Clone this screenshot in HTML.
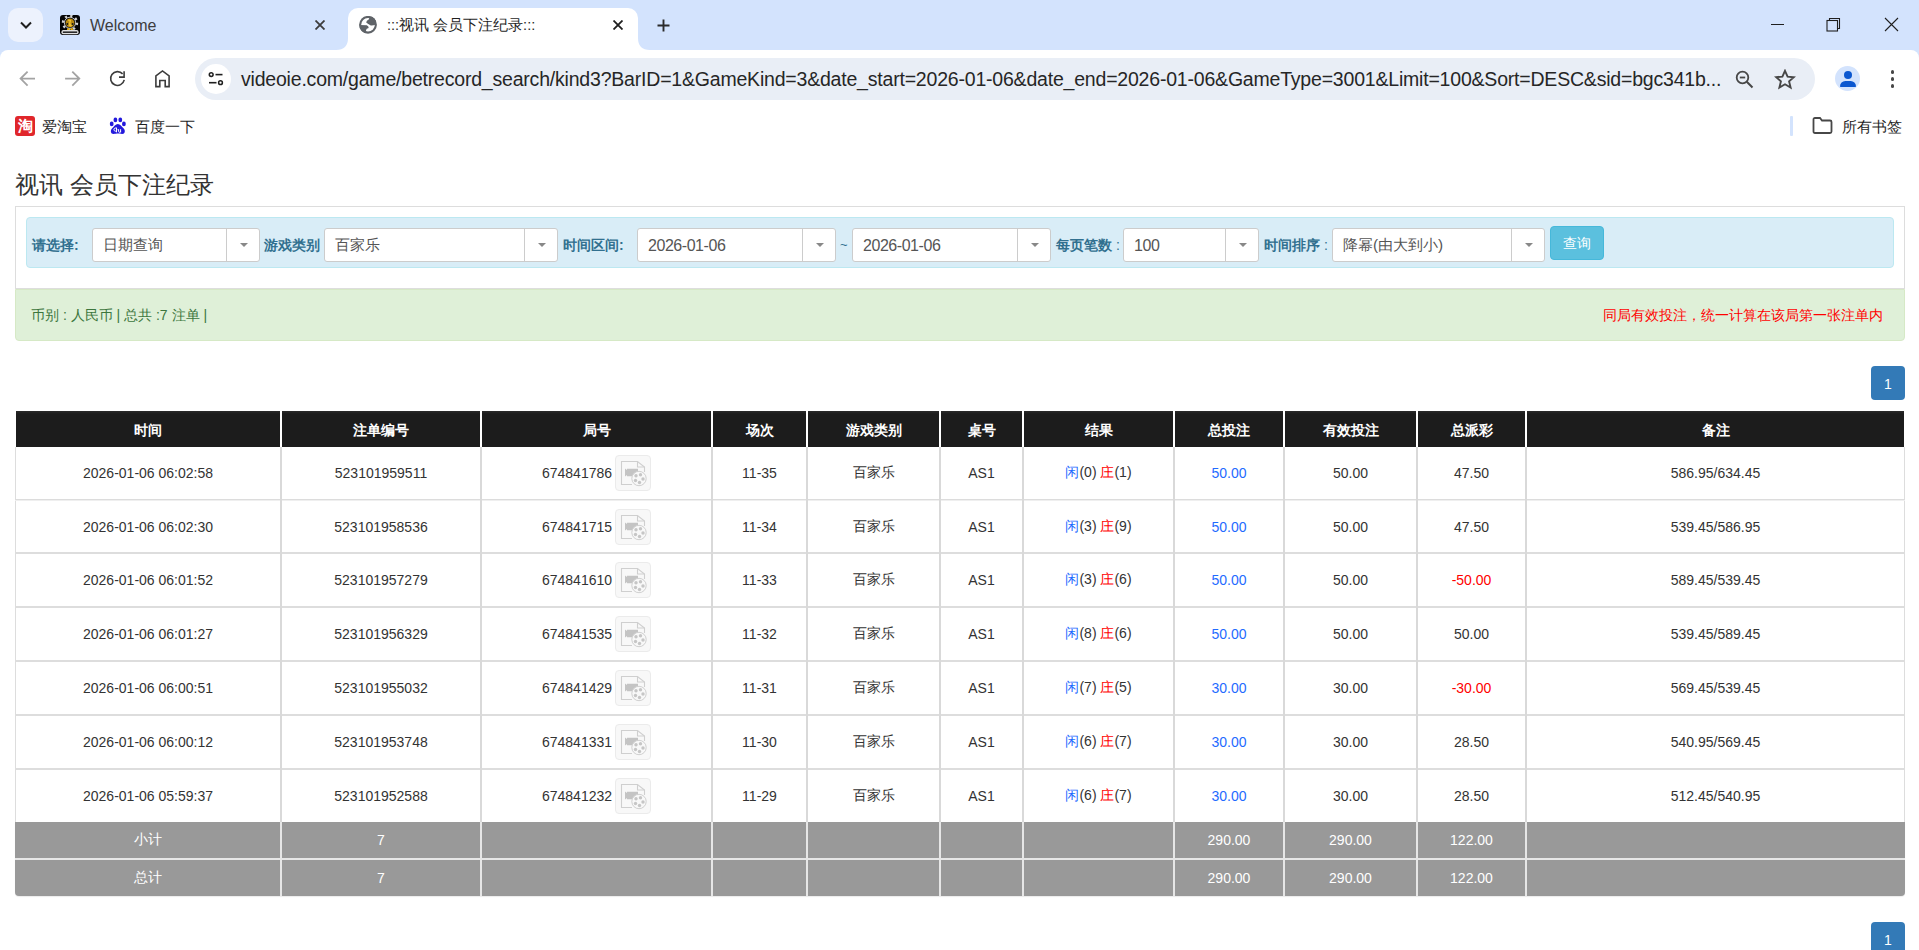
<!DOCTYPE html><html><head><meta charset="utf-8"><style>
*{box-sizing:border-box;margin:0;padding:0}
html,body{width:1919px;height:950px;overflow:hidden;background:#fff;font-family:"Liberation Sans", sans-serif;}
.a{position:absolute}
.cc{display:flex;align-items:center;justify-content:center}
.tx{white-space:nowrap}

</style></head><body>
<div class="a" style="left:0;top:0;width:1919px;height:60px;background:#d3e3fd"></div>
<div class="a cc" style="left:8px;top:8px;width:35px;height:34px;border-radius:10px;background:#edf2fd"><svg width="14" height="9" viewBox="0 0 14 9"><path d="M2 1.5 L7 6.5 L12 1.5" fill="none" stroke="#1f1f1f" stroke-width="2"/></svg></div>
<svg class="a" style="left:60px;top:15px" width="20" height="20" viewBox="0 0 20 20"><rect x="0" y="0" width="20" height="20" rx="3" fill="#050505"/><circle cx="10" cy="7.8" r="7" fill="none" stroke="#d4d4d4" stroke-width="2.4" stroke-dasharray="2.2 3.3"/><circle cx="10" cy="7.8" r="5.6" fill="none" stroke="#c8c8c8" stroke-width="1"/><circle cx="10" cy="7.8" r="4.4" fill="#b88a12"/><path d="M8.2 4.6 Q11.8 4 10.8 6.8 Q9.6 9.2 12.2 10.4 L10.2 11.8 Q7.6 10 9.2 7.4 Q10 5.8 8.2 6.2Z" fill="#f2c230"/><circle cx="7.4" cy="9" r="1" fill="#1a1a1a"/><circle cx="12.6" cy="9" r="1" fill="#1a1a1a"/><circle cx="8.3" cy="14.4" r="1.3" fill="#e0a810"/><circle cx="11.7" cy="14.4" r="1.3" fill="#e0a810"/><rect x="1.4" y="15.1" width="17.2" height="4.2" rx="2" fill="#e0e0e0"/><rect x="2.8" y="16.4" width="14.4" height="1.6" fill="#2a2a2a"/></svg>
<div class="a tx" style="left:90px;top:16px;font-size:16px;line-height:20px;color:#3d3d3d">Welcome</div>
<svg class="a" style="left:314.7px;top:20px" width="10" height="10" viewBox="0 0 10 10"><path d="M0.5 0.5 L9.5 9.5 M9.5 0.5 L0.5 9.5" stroke="#3c3c3c" stroke-width="1.8" fill="none"/></svg>
<div class="a" style="left:348px;top:7.5px;width:289.5px;height:42.5px;background:#fff;border-radius:10px 10px 0 0"></div>
<svg class="a" style="left:336px;top:38px" width="12" height="12" viewBox="0 0 12 12"><path d="M0 12 Q12 12 12 0 L12 12 Z" fill="#fff"/></svg>
<svg class="a" style="left:638px;top:38px" width="12" height="12" viewBox="0 0 12 12"><path d="M12 12 Q0 12 0 0 L0 12 Z" fill="#fff"/></svg>
<svg class="a" style="left:359px;top:16px" width="18" height="18" viewBox="0 0 18 18"><defs><clipPath id="gc"><circle cx="9" cy="8.8" r="8.9"/></clipPath></defs><circle cx="9" cy="8.8" r="8.9" fill="#5f6368"/><circle cx="9" cy="8.8" r="6.8" fill="#fff"/><g clip-path="url(#gc)"><path d="M10.4 0.5 L10 3.3 Q7.2 4.6 7.2 6.6 Q8.6 7.6 11.3 9.3 Q13.2 10 17 8.4 L17 0.5 Z" fill="#5f6368"/><path d="M0.5 9.1 L7.8 9.2 Q9.9 10.1 9.7 12 Q7.3 12.6 7 14.2 L7.4 17.5 L0.5 17.5 Z" fill="#5f6368"/></g></svg>
<div class="a tx" style="left:387px;top:15px;font-size:14.5px;line-height:20px;color:#1f1f1f">:::视讯 会员下注纪录:::</div>
<svg class="a" style="left:612.5px;top:20px" width="10" height="10" viewBox="0 0 10 10"><path d="M0.5 0.5 L9.5 9.5 M9.5 0.5 L0.5 9.5" stroke="#1f1f1f" stroke-width="1.8" fill="none"/></svg>
<svg class="a" style="left:656.5px;top:18.5px" width="13" height="13" viewBox="0 0 13 13"><path d="M6.5 0.5 V12.5 M0.5 6.5 H12.5" stroke="#2a2a2a" stroke-width="1.9"/></svg>
<div class="a" style="left:1771px;top:24px;width:13px;height:1px;background:#1f1f1f"></div>
<svg class="a" style="left:1826px;top:17px" width="15" height="15" viewBox="0 0 15 15"><rect x="1" y="3.5" width="10.5" height="10.5" fill="none" stroke="#1f1f1f" stroke-width="1.1"/><path d="M3.5 3.5 V1.5 H13.5 V11.5 H11.5" fill="none" stroke="#1f1f1f" stroke-width="1.1"/></svg>
<svg class="a" style="left:1884px;top:17px" width="15" height="15" viewBox="0 0 15 15"><path d="M1 1 L14 14 M14 1 L1 14" stroke="#1f1f1f" stroke-width="1.1"/></svg>
<div class="a" style="left:0;top:50px;width:1919px;height:90px;background:#fff;border-radius:8px 8px 0 0"></div>
<svg class="a" style="left:19px;top:70px" width="18" height="18" viewBox="0 0 18 18"><path d="M16 8.6 H2 M8.6 1.6 L1.6 8.6 L8.6 15.6" fill="none" stroke="#a3a3a3" stroke-width="1.8"/></svg>
<svg class="a" style="left:63px;top:70px" width="18" height="18" viewBox="0 0 18 18"><path d="M2.1 8.6 H16 M9.3 1.6 L16.3 8.6 L9.3 15.6" fill="none" stroke="#a3a3a3" stroke-width="1.8"/></svg>
<svg class="a" style="left:108px;top:69px" width="19" height="19" viewBox="0 0 19 19"><path d="M16.25 10.93 A6.9 6.9 0 1 1 14.63 4.88" fill="none" stroke="#3c3c3c" stroke-width="1.6"/><path d="M11 8.1 H16.1 V2.2" fill="none" stroke="#3c3c3c" stroke-width="1.6"/></svg>
<svg class="a" style="left:153px;top:69px" width="19" height="19" viewBox="0 0 19 19"><path d="M2.9 17.6 V6.9 L9.5 1.9 L16.1 6.9 V17.6 H12.2 V11.5 H6.8 V17.6 Z" fill="none" stroke="#3c3c3c" stroke-width="1.6" stroke-linejoin="miter"/></svg>
<div class="a" style="left:195px;top:58px;width:1620px;height:42px;border-radius:21px;background:#e9eef6"></div>
<div class="a" style="left:201px;top:64px;width:30px;height:30px;border-radius:50%;background:#fff"></div>
<svg class="a" style="left:208px;top:71px" width="16" height="16" viewBox="0 0 16 16"><circle cx="3.2" cy="3.6" r="1.9" fill="none" stroke="#1f1f1f" stroke-width="1.5"/><path d="M7.5 3.6 H14.5" stroke="#1f1f1f" stroke-width="1.6"/><circle cx="12.5" cy="11.7" r="1.9" fill="none" stroke="#1f1f1f" stroke-width="1.5"/><path d="M1 11.7 H8.5" stroke="#1f1f1f" stroke-width="1.6"/></svg>
<div id="url" class="a tx" style="left:241px;top:66px;font-size:19.5px;line-height:26px;color:#262626;letter-spacing:-0.2px">videoie.com/game/betrecord_search/kind3?BarID=1&amp;GameKind=3&amp;date_start=2026-01-06&amp;date_end=2026-01-06&amp;GameType=3001&amp;Limit=100&amp;Sort=DESC&amp;sid=bgc341b...</div>
<svg class="a" style="left:1735px;top:70px" width="20" height="20" viewBox="0 0 20 20"><circle cx="7.5" cy="7.5" r="5.8" fill="none" stroke="#474747" stroke-width="1.8"/><path d="M4.8 7.5 H10.2" stroke="#474747" stroke-width="1.8"/><path d="M11.8 11.8 L17.5 17.5" stroke="#474747" stroke-width="2"/></svg>
<svg class="a" style="left:1774px;top:69px" width="22" height="21" viewBox="0 0 22 21"><path d="M11 1.8 L13.6 7.6 L19.9 8.2 L15.1 12.4 L16.6 18.6 L11 15.3 L5.4 18.6 L6.9 12.4 L2.1 8.2 L8.4 7.6 Z" fill="none" stroke="#474747" stroke-width="1.9" stroke-linejoin="miter"/></svg>
<div class="a" style="left:1835px;top:66px;width:25px;height:25px;border-radius:50%;background:#d3e3fd;overflow:hidden"><div class="a" style="left:8.5px;top:5px;width:8px;height:8px;border-radius:50%;background:#0b57d0"></div><div class="a" style="left:5px;top:14.5px;width:15.5px;height:6.5px;border-radius:8px 8px 1px 1px;background:#0b57d0"></div></div>
<div class="a" style="left:1890.7px;top:70.2px;width:3.6px;height:3.6px;border-radius:50%;background:#474747"></div>
<div class="a" style="left:1890.7px;top:77.2px;width:3.6px;height:3.6px;border-radius:50%;background:#474747"></div>
<div class="a" style="left:1890.7px;top:84.2px;width:3.6px;height:3.6px;border-radius:50%;background:#474747"></div>
<div class="a" style="left:15px;top:116px;width:20px;height:20px;background:#e0262b;border-radius:3px;color:#fff;font-size:15px;line-height:20px;text-align:center;font-weight:bold">淘</div>
<div class="a tx" style="left:42px;top:118px;font-size:14.5px;line-height:18px;color:#1f1f1f">爱淘宝</div>
<svg class="a" style="left:105px;top:112px" width="26" height="26" viewBox="0 0 26 26"><g fill="#2319dc"><ellipse cx="6.7" cy="11.9" rx="1.9" ry="2.3"/><ellipse cx="10.4" cy="7.9" rx="1.9" ry="2.4"/><ellipse cx="15.3" cy="7.9" rx="1.9" ry="2.4"/><ellipse cx="18.9" cy="11.9" rx="1.9" ry="2.3"/><path d="M12.8 12 C10.5 12 9 14.5 7 16.5 C5.2 18.3 5.5 22 8.5 22 C10.5 22 11.5 21.6 12.8 21.6 C14.2 21.6 15.2 22 17.2 22 C20.2 22 20.5 18.3 18.7 16.5 C16.7 14.5 15.2 12 12.8 12Z"/></g><path d="M11.5 15.5 V20.3 M11.5 18.7 A1.5 1.6 0 1 0 11.4 18.8" fill="none" stroke="#fff" stroke-width="1"/><path d="M13.6 17.2 V19.3 Q13.6 20.3 14.6 20.3 Q15.6 20.3 15.6 19.3 V17.2 M15.6 19 V20.4" fill="none" stroke="#fff" stroke-width="1"/></svg>
<div class="a tx" style="left:135px;top:118px;font-size:14.5px;line-height:18px;color:#1f1f1f">百度一下</div>
<div class="a" style="left:1790px;top:116px;width:2.5px;height:20px;background:#d3e3fd;border-radius:1px"></div>
<svg class="a" style="left:1812px;top:117px" width="21" height="17" viewBox="0 0 21 17"><path d="M1.5 2.5 Q1.5 1 3 1 H8 L10 3.5 H18 Q19.5 3.5 19.5 5 V14.5 Q19.5 16 18 16 H3 Q1.5 16 1.5 14.5 Z" fill="none" stroke="#474747" stroke-width="1.8"/></svg>
<div class="a tx" style="left:1842px;top:118px;font-size:14.5px;line-height:18px;color:#1f1f1f">所有书签</div>
<div class="a tx" style="left:15px;top:171.5px;font-size:24px;line-height:26px;color:#333">视讯 会员下注纪录</div>
<div class="a" style="left:15px;top:206px;width:1890px;height:83px;border:1px solid #ddd;background:#fff"></div>
<div class="a" style="left:26px;top:217px;width:1868px;height:51px;border:1px solid #bce8f1;background:#d9edf7;border-radius:4px"></div>
<div class="a tx" style="left:32px;top:236px;font-size:14px;line-height:18px;color:#31708f;font-weight:bold">请选择:</div>
<div class="a" style="left:92px;top:228px;width:168px;height:34px;border:1px solid #ccc;border-radius:3px;background:#fff"></div><div class="a" style="left:226px;top:229px;width:1px;height:32px;background:#ccc"></div><div class="a" style="left:239.5px;top:243px;width:0;height:0;border-left:4px solid transparent;border-right:4px solid transparent;border-top:4.5px solid #888"></div><div class="a tx" style="left:103px;top:235px;font-size:15.3px;line-height:20px;color:#555">日期查询</div>
<div class="a tx" style="left:264px;top:236px;font-size:14px;line-height:18px;color:#31708f;font-weight:bold">游戏类别</div>
<div class="a" style="left:324px;top:228px;width:234px;height:34px;border:1px solid #ccc;border-radius:3px;background:#fff"></div><div class="a" style="left:524px;top:229px;width:1px;height:32px;background:#ccc"></div><div class="a" style="left:537.5px;top:243px;width:0;height:0;border-left:4px solid transparent;border-right:4px solid transparent;border-top:4.5px solid #888"></div><div class="a tx" style="left:335px;top:235px;font-size:15.3px;line-height:20px;color:#555">百家乐</div>
<div class="a tx" style="left:563px;top:236px;font-size:14px;line-height:18px;color:#31708f;font-weight:bold">时间区间:</div>
<div class="a" style="left:637px;top:228px;width:199px;height:34px;border:1px solid #ccc;border-radius:3px;background:#fff"></div><div class="a" style="left:802px;top:229px;width:1px;height:32px;background:#ccc"></div><div class="a" style="left:815.5px;top:243px;width:0;height:0;border-left:4px solid transparent;border-right:4px solid transparent;border-top:4.5px solid #888"></div><div class="a tx" style="left:648px;top:235.5px;font-size:16px;letter-spacing:-0.45px;line-height:20px;color:#555">2026-01-06</div>
<div class="a tx" style="left:840px;top:236px;font-size:13px;line-height:18px;color:#31708f">~</div>
<div class="a" style="left:852px;top:228px;width:199px;height:34px;border:1px solid #ccc;border-radius:3px;background:#fff"></div><div class="a" style="left:1017px;top:229px;width:1px;height:32px;background:#ccc"></div><div class="a" style="left:1030.5px;top:243px;width:0;height:0;border-left:4px solid transparent;border-right:4px solid transparent;border-top:4.5px solid #888"></div><div class="a tx" style="left:863px;top:235.5px;font-size:16px;letter-spacing:-0.45px;line-height:20px;color:#555">2026-01-06</div>
<div class="a tx" style="left:1056px;top:236px;font-size:14px;line-height:18px;color:#31708f;font-weight:bold">每页笔数<span style="font-weight:normal"> :</span></div>
<div class="a" style="left:1123px;top:228px;width:136px;height:34px;border:1px solid #ccc;border-radius:3px;background:#fff"></div><div class="a" style="left:1225px;top:229px;width:1px;height:32px;background:#ccc"></div><div class="a" style="left:1238.5px;top:243px;width:0;height:0;border-left:4px solid transparent;border-right:4px solid transparent;border-top:4.5px solid #888"></div><div class="a tx" style="left:1134px;top:235.5px;font-size:16px;letter-spacing:-0.45px;line-height:20px;color:#555">100</div>
<div class="a tx" style="left:1264px;top:236px;font-size:14px;line-height:18px;color:#31708f;font-weight:bold">时间排序<span style="font-weight:normal"> :</span></div>
<div class="a" style="left:1332px;top:228px;width:213px;height:34px;border:1px solid #ccc;border-radius:3px;background:#fff"></div><div class="a" style="left:1511px;top:229px;width:1px;height:32px;background:#ccc"></div><div class="a" style="left:1524.5px;top:243px;width:0;height:0;border-left:4px solid transparent;border-right:4px solid transparent;border-top:4.5px solid #888"></div><div class="a tx" style="left:1343px;top:235px;font-size:15.3px;line-height:20px;color:#555">降幂(由大到小)</div>
<div class="a cc tx" style="left:1550px;top:226px;width:54px;height:34px;background:#5bc0de;border:1px solid #46b8da;border-radius:4px;color:#fff;font-size:14px;padding-top:2px">查询</div>
<div class="a" style="left:15px;top:289px;width:1890px;height:52px;border:1px solid #d6e9c6;background:#dff0d8;border-radius:0 0 4px 4px"></div>
<div class="a tx" style="left:31px;top:306px;font-size:14px;line-height:18px;color:#3c763d">币别 : 人民币 | 总共 :7 注单 |</div>
<div class="a tx" style="right:36px;top:306px;font-size:14px;line-height:18px;color:#f00">同局有效投注，统一计算在该局第一张注单内</div>
<div class="a cc" style="left:1871px;top:366px;width:34px;height:34px;background:#337ab7;border-radius:4px;color:#fff;font-size:14px;padding-top:1px">1</div>
<div class="a cc" style="left:1871px;top:922px;width:34px;height:34px;background:#337ab7;border-radius:4px;color:#fff;font-size:14px;padding-top:1px">1</div>
<div class="a" style="left:15px;top:447px;width:1890px;height:375px;background:#fff;border-left:1px solid #ddd;border-right:1px solid #ddd"></div>
<div class="a" style="left:15px;top:499px;width:1890px;height:1px;background:#dcdcdc"></div>
<div class="a" style="left:15px;top:500px;width:1890px;height:1px;background:#efefef"></div>
<div class="a" style="left:15px;top:552px;width:1890px;height:2px;background:#ddd"></div>
<div class="a" style="left:15px;top:606px;width:1890px;height:2px;background:#ddd"></div>
<div class="a" style="left:15px;top:660px;width:1890px;height:2px;background:#ddd"></div>
<div class="a" style="left:15px;top:714px;width:1890px;height:2px;background:#ddd"></div>
<div class="a" style="left:15px;top:768px;width:1890px;height:2px;background:#ddd"></div>
<div class="a" style="left:280px;top:447px;width:2px;height:375px;background:#d9d9d9"></div>
<div class="a" style="left:480px;top:447px;width:2px;height:375px;background:#d9d9d9"></div>
<div class="a" style="left:711px;top:447px;width:2px;height:375px;background:#d9d9d9"></div>
<div class="a" style="left:806px;top:447px;width:2px;height:375px;background:#d9d9d9"></div>
<div class="a" style="left:939px;top:447px;width:2px;height:375px;background:#d9d9d9"></div>
<div class="a" style="left:1022px;top:447px;width:2px;height:375px;background:#d9d9d9"></div>
<div class="a" style="left:1173px;top:447px;width:2px;height:375px;background:#d9d9d9"></div>
<div class="a" style="left:1283px;top:447px;width:2px;height:375px;background:#d9d9d9"></div>
<div class="a" style="left:1416px;top:447px;width:2px;height:375px;background:#d9d9d9"></div>
<div class="a" style="left:1525px;top:447px;width:2px;height:375px;background:#d9d9d9"></div>
<div class="a cc tx" style="left:16px;top:411px;width:264px;height:36px;padding-top:3px;background:linear-gradient(#2a2a2a,#1c1c1c 3px);color:#fff;font-size:14px;font-weight:bold">时间</div>
<div class="a cc tx" style="left:282px;top:411px;width:198px;height:36px;padding-top:3px;background:linear-gradient(#2a2a2a,#1c1c1c 3px);color:#fff;font-size:14px;font-weight:bold">注单编号</div>
<div class="a cc tx" style="left:482px;top:411px;width:229px;height:36px;padding-top:3px;background:linear-gradient(#2a2a2a,#1c1c1c 3px);color:#fff;font-size:14px;font-weight:bold">局号</div>
<div class="a cc tx" style="left:713px;top:411px;width:93px;height:36px;padding-top:3px;background:linear-gradient(#2a2a2a,#1c1c1c 3px);color:#fff;font-size:14px;font-weight:bold">场次</div>
<div class="a cc tx" style="left:808px;top:411px;width:131px;height:36px;padding-top:3px;background:linear-gradient(#2a2a2a,#1c1c1c 3px);color:#fff;font-size:14px;font-weight:bold">游戏类别</div>
<div class="a cc tx" style="left:941px;top:411px;width:81px;height:36px;padding-top:3px;background:linear-gradient(#2a2a2a,#1c1c1c 3px);color:#fff;font-size:14px;font-weight:bold">桌号</div>
<div class="a cc tx" style="left:1024px;top:411px;width:149px;height:36px;padding-top:3px;background:linear-gradient(#2a2a2a,#1c1c1c 3px);color:#fff;font-size:14px;font-weight:bold">结果</div>
<div class="a cc tx" style="left:1175px;top:411px;width:108px;height:36px;padding-top:3px;background:linear-gradient(#2a2a2a,#1c1c1c 3px);color:#fff;font-size:14px;font-weight:bold">总投注</div>
<div class="a cc tx" style="left:1285px;top:411px;width:131px;height:36px;padding-top:3px;background:linear-gradient(#2a2a2a,#1c1c1c 3px);color:#fff;font-size:14px;font-weight:bold">有效投注</div>
<div class="a cc tx" style="left:1418px;top:411px;width:107px;height:36px;padding-top:3px;background:linear-gradient(#2a2a2a,#1c1c1c 3px);color:#fff;font-size:14px;font-weight:bold">总派彩</div>
<div class="a cc tx" style="left:1527px;top:411px;width:377px;height:36px;padding-top:3px;background:linear-gradient(#2a2a2a,#1c1c1c 3px);color:#fff;font-size:14px;font-weight:bold">备注</div>
<div class="a cc tx" style="left:16px;top:447px;width:264px;height:52px;font-size:14px;color:#333">2026-01-06 06:02:58</div>
<div class="a cc tx" style="left:282px;top:447px;width:198px;height:52px;font-size:14px;color:#333">523101959511</div>
<div class="a cc tx" style="left:482px;top:447px;width:229px;height:52px;font-size:14px;color:#333"><span style="vertical-align:middle">674841786</span><span style="display:inline-block;width:36px;height:36px;margin-left:3px;border:1px solid #ebebeb;border-radius:4px;background:#f8f8f8;position:relative;vertical-align:middle"><svg style="position:absolute;left:-1px;top:-1px" width="36" height="36" viewBox="0 0 36 36"><path d="M17 29.5 H6.5 V6.5 H22.5 L29.5 12 V17" fill="none" stroke="#cfcfcf" stroke-width="1.1"/><path d="M22.5 6.5 V12 H29.5" fill="none" stroke="#cfcfcf" stroke-width="1.1"/><path d="M10 13.5 L12 15 V13.8 H23 V21.3 H12 V20 L10 21.5 Z" fill="#c4c4c4"/><circle cx="24" cy="23.5" r="7.2" fill="#f8f8f8" stroke="#d0d0d0" stroke-width="1"/><g fill="#c6c6c6"><circle cx="21" cy="20.8" r="1.7"/><circle cx="25.5" cy="19.8" r="1.7"/><circle cx="28" cy="24" r="1.7"/><circle cx="24.5" cy="27.5" r="1.7"/><circle cx="20.5" cy="25.5" r="1.7"/></g></svg></span></div>
<div class="a cc tx" style="left:713px;top:447px;width:93px;height:52px;font-size:14px;color:#333">11-35</div>
<div class="a cc tx" style="left:808px;top:447px;width:131px;height:52px;font-size:14px;color:#333">百家乐</div>
<div class="a cc tx" style="left:941px;top:447px;width:81px;height:52px;font-size:14px;color:#333">AS1</div>
<div class="a cc tx" style="left:1024px;top:447px;width:149px;height:52px;font-size:14px;color:#333"><span><span style="color:#1f6bff">闲</span>(0) <span style="color:#f00">庄</span>(1)</span></div>
<div class="a cc tx" style="left:1175px;top:447px;width:108px;height:52px;font-size:14px;color:#1f6bff">50.00</div>
<div class="a cc tx" style="left:1285px;top:447px;width:131px;height:52px;font-size:14px;color:#333">50.00</div>
<div class="a cc tx" style="left:1418px;top:447px;width:107px;height:52px;font-size:14px;color:#333">47.50</div>
<div class="a cc tx" style="left:1527px;top:447px;width:377px;height:52px;font-size:14px;color:#333">586.95/634.45</div>
<div class="a cc tx" style="left:16px;top:501px;width:264px;height:51px;font-size:14px;color:#333">2026-01-06 06:02:30</div>
<div class="a cc tx" style="left:282px;top:501px;width:198px;height:51px;font-size:14px;color:#333">523101958536</div>
<div class="a cc tx" style="left:482px;top:501px;width:229px;height:51px;font-size:14px;color:#333"><span style="vertical-align:middle">674841715</span><span style="display:inline-block;width:36px;height:36px;margin-left:3px;border:1px solid #ebebeb;border-radius:4px;background:#f8f8f8;position:relative;vertical-align:middle"><svg style="position:absolute;left:-1px;top:-1px" width="36" height="36" viewBox="0 0 36 36"><path d="M17 29.5 H6.5 V6.5 H22.5 L29.5 12 V17" fill="none" stroke="#cfcfcf" stroke-width="1.1"/><path d="M22.5 6.5 V12 H29.5" fill="none" stroke="#cfcfcf" stroke-width="1.1"/><path d="M10 13.5 L12 15 V13.8 H23 V21.3 H12 V20 L10 21.5 Z" fill="#c4c4c4"/><circle cx="24" cy="23.5" r="7.2" fill="#f8f8f8" stroke="#d0d0d0" stroke-width="1"/><g fill="#c6c6c6"><circle cx="21" cy="20.8" r="1.7"/><circle cx="25.5" cy="19.8" r="1.7"/><circle cx="28" cy="24" r="1.7"/><circle cx="24.5" cy="27.5" r="1.7"/><circle cx="20.5" cy="25.5" r="1.7"/></g></svg></span></div>
<div class="a cc tx" style="left:713px;top:501px;width:93px;height:51px;font-size:14px;color:#333">11-34</div>
<div class="a cc tx" style="left:808px;top:501px;width:131px;height:51px;font-size:14px;color:#333">百家乐</div>
<div class="a cc tx" style="left:941px;top:501px;width:81px;height:51px;font-size:14px;color:#333">AS1</div>
<div class="a cc tx" style="left:1024px;top:501px;width:149px;height:51px;font-size:14px;color:#333"><span><span style="color:#1f6bff">闲</span>(3) <span style="color:#f00">庄</span>(9)</span></div>
<div class="a cc tx" style="left:1175px;top:501px;width:108px;height:51px;font-size:14px;color:#1f6bff">50.00</div>
<div class="a cc tx" style="left:1285px;top:501px;width:131px;height:51px;font-size:14px;color:#333">50.00</div>
<div class="a cc tx" style="left:1418px;top:501px;width:107px;height:51px;font-size:14px;color:#333">47.50</div>
<div class="a cc tx" style="left:1527px;top:501px;width:377px;height:51px;font-size:14px;color:#333">539.45/586.95</div>
<div class="a cc tx" style="left:16px;top:554px;width:264px;height:52px;font-size:14px;color:#333">2026-01-06 06:01:52</div>
<div class="a cc tx" style="left:282px;top:554px;width:198px;height:52px;font-size:14px;color:#333">523101957279</div>
<div class="a cc tx" style="left:482px;top:554px;width:229px;height:52px;font-size:14px;color:#333"><span style="vertical-align:middle">674841610</span><span style="display:inline-block;width:36px;height:36px;margin-left:3px;border:1px solid #ebebeb;border-radius:4px;background:#f8f8f8;position:relative;vertical-align:middle"><svg style="position:absolute;left:-1px;top:-1px" width="36" height="36" viewBox="0 0 36 36"><path d="M17 29.5 H6.5 V6.5 H22.5 L29.5 12 V17" fill="none" stroke="#cfcfcf" stroke-width="1.1"/><path d="M22.5 6.5 V12 H29.5" fill="none" stroke="#cfcfcf" stroke-width="1.1"/><path d="M10 13.5 L12 15 V13.8 H23 V21.3 H12 V20 L10 21.5 Z" fill="#c4c4c4"/><circle cx="24" cy="23.5" r="7.2" fill="#f8f8f8" stroke="#d0d0d0" stroke-width="1"/><g fill="#c6c6c6"><circle cx="21" cy="20.8" r="1.7"/><circle cx="25.5" cy="19.8" r="1.7"/><circle cx="28" cy="24" r="1.7"/><circle cx="24.5" cy="27.5" r="1.7"/><circle cx="20.5" cy="25.5" r="1.7"/></g></svg></span></div>
<div class="a cc tx" style="left:713px;top:554px;width:93px;height:52px;font-size:14px;color:#333">11-33</div>
<div class="a cc tx" style="left:808px;top:554px;width:131px;height:52px;font-size:14px;color:#333">百家乐</div>
<div class="a cc tx" style="left:941px;top:554px;width:81px;height:52px;font-size:14px;color:#333">AS1</div>
<div class="a cc tx" style="left:1024px;top:554px;width:149px;height:52px;font-size:14px;color:#333"><span><span style="color:#1f6bff">闲</span>(3) <span style="color:#f00">庄</span>(6)</span></div>
<div class="a cc tx" style="left:1175px;top:554px;width:108px;height:52px;font-size:14px;color:#1f6bff">50.00</div>
<div class="a cc tx" style="left:1285px;top:554px;width:131px;height:52px;font-size:14px;color:#333">50.00</div>
<div class="a cc tx" style="left:1418px;top:554px;width:107px;height:52px;font-size:14px;color:#f00">-50.00</div>
<div class="a cc tx" style="left:1527px;top:554px;width:377px;height:52px;font-size:14px;color:#333">589.45/539.45</div>
<div class="a cc tx" style="left:16px;top:608px;width:264px;height:52px;font-size:14px;color:#333">2026-01-06 06:01:27</div>
<div class="a cc tx" style="left:282px;top:608px;width:198px;height:52px;font-size:14px;color:#333">523101956329</div>
<div class="a cc tx" style="left:482px;top:608px;width:229px;height:52px;font-size:14px;color:#333"><span style="vertical-align:middle">674841535</span><span style="display:inline-block;width:36px;height:36px;margin-left:3px;border:1px solid #ebebeb;border-radius:4px;background:#f8f8f8;position:relative;vertical-align:middle"><svg style="position:absolute;left:-1px;top:-1px" width="36" height="36" viewBox="0 0 36 36"><path d="M17 29.5 H6.5 V6.5 H22.5 L29.5 12 V17" fill="none" stroke="#cfcfcf" stroke-width="1.1"/><path d="M22.5 6.5 V12 H29.5" fill="none" stroke="#cfcfcf" stroke-width="1.1"/><path d="M10 13.5 L12 15 V13.8 H23 V21.3 H12 V20 L10 21.5 Z" fill="#c4c4c4"/><circle cx="24" cy="23.5" r="7.2" fill="#f8f8f8" stroke="#d0d0d0" stroke-width="1"/><g fill="#c6c6c6"><circle cx="21" cy="20.8" r="1.7"/><circle cx="25.5" cy="19.8" r="1.7"/><circle cx="28" cy="24" r="1.7"/><circle cx="24.5" cy="27.5" r="1.7"/><circle cx="20.5" cy="25.5" r="1.7"/></g></svg></span></div>
<div class="a cc tx" style="left:713px;top:608px;width:93px;height:52px;font-size:14px;color:#333">11-32</div>
<div class="a cc tx" style="left:808px;top:608px;width:131px;height:52px;font-size:14px;color:#333">百家乐</div>
<div class="a cc tx" style="left:941px;top:608px;width:81px;height:52px;font-size:14px;color:#333">AS1</div>
<div class="a cc tx" style="left:1024px;top:608px;width:149px;height:52px;font-size:14px;color:#333"><span><span style="color:#1f6bff">闲</span>(8) <span style="color:#f00">庄</span>(6)</span></div>
<div class="a cc tx" style="left:1175px;top:608px;width:108px;height:52px;font-size:14px;color:#1f6bff">50.00</div>
<div class="a cc tx" style="left:1285px;top:608px;width:131px;height:52px;font-size:14px;color:#333">50.00</div>
<div class="a cc tx" style="left:1418px;top:608px;width:107px;height:52px;font-size:14px;color:#333">50.00</div>
<div class="a cc tx" style="left:1527px;top:608px;width:377px;height:52px;font-size:14px;color:#333">539.45/589.45</div>
<div class="a cc tx" style="left:16px;top:662px;width:264px;height:52px;font-size:14px;color:#333">2026-01-06 06:00:51</div>
<div class="a cc tx" style="left:282px;top:662px;width:198px;height:52px;font-size:14px;color:#333">523101955032</div>
<div class="a cc tx" style="left:482px;top:662px;width:229px;height:52px;font-size:14px;color:#333"><span style="vertical-align:middle">674841429</span><span style="display:inline-block;width:36px;height:36px;margin-left:3px;border:1px solid #ebebeb;border-radius:4px;background:#f8f8f8;position:relative;vertical-align:middle"><svg style="position:absolute;left:-1px;top:-1px" width="36" height="36" viewBox="0 0 36 36"><path d="M17 29.5 H6.5 V6.5 H22.5 L29.5 12 V17" fill="none" stroke="#cfcfcf" stroke-width="1.1"/><path d="M22.5 6.5 V12 H29.5" fill="none" stroke="#cfcfcf" stroke-width="1.1"/><path d="M10 13.5 L12 15 V13.8 H23 V21.3 H12 V20 L10 21.5 Z" fill="#c4c4c4"/><circle cx="24" cy="23.5" r="7.2" fill="#f8f8f8" stroke="#d0d0d0" stroke-width="1"/><g fill="#c6c6c6"><circle cx="21" cy="20.8" r="1.7"/><circle cx="25.5" cy="19.8" r="1.7"/><circle cx="28" cy="24" r="1.7"/><circle cx="24.5" cy="27.5" r="1.7"/><circle cx="20.5" cy="25.5" r="1.7"/></g></svg></span></div>
<div class="a cc tx" style="left:713px;top:662px;width:93px;height:52px;font-size:14px;color:#333">11-31</div>
<div class="a cc tx" style="left:808px;top:662px;width:131px;height:52px;font-size:14px;color:#333">百家乐</div>
<div class="a cc tx" style="left:941px;top:662px;width:81px;height:52px;font-size:14px;color:#333">AS1</div>
<div class="a cc tx" style="left:1024px;top:662px;width:149px;height:52px;font-size:14px;color:#333"><span><span style="color:#1f6bff">闲</span>(7) <span style="color:#f00">庄</span>(5)</span></div>
<div class="a cc tx" style="left:1175px;top:662px;width:108px;height:52px;font-size:14px;color:#1f6bff">30.00</div>
<div class="a cc tx" style="left:1285px;top:662px;width:131px;height:52px;font-size:14px;color:#333">30.00</div>
<div class="a cc tx" style="left:1418px;top:662px;width:107px;height:52px;font-size:14px;color:#f00">-30.00</div>
<div class="a cc tx" style="left:1527px;top:662px;width:377px;height:52px;font-size:14px;color:#333">569.45/539.45</div>
<div class="a cc tx" style="left:16px;top:716px;width:264px;height:52px;font-size:14px;color:#333">2026-01-06 06:00:12</div>
<div class="a cc tx" style="left:282px;top:716px;width:198px;height:52px;font-size:14px;color:#333">523101953748</div>
<div class="a cc tx" style="left:482px;top:716px;width:229px;height:52px;font-size:14px;color:#333"><span style="vertical-align:middle">674841331</span><span style="display:inline-block;width:36px;height:36px;margin-left:3px;border:1px solid #ebebeb;border-radius:4px;background:#f8f8f8;position:relative;vertical-align:middle"><svg style="position:absolute;left:-1px;top:-1px" width="36" height="36" viewBox="0 0 36 36"><path d="M17 29.5 H6.5 V6.5 H22.5 L29.5 12 V17" fill="none" stroke="#cfcfcf" stroke-width="1.1"/><path d="M22.5 6.5 V12 H29.5" fill="none" stroke="#cfcfcf" stroke-width="1.1"/><path d="M10 13.5 L12 15 V13.8 H23 V21.3 H12 V20 L10 21.5 Z" fill="#c4c4c4"/><circle cx="24" cy="23.5" r="7.2" fill="#f8f8f8" stroke="#d0d0d0" stroke-width="1"/><g fill="#c6c6c6"><circle cx="21" cy="20.8" r="1.7"/><circle cx="25.5" cy="19.8" r="1.7"/><circle cx="28" cy="24" r="1.7"/><circle cx="24.5" cy="27.5" r="1.7"/><circle cx="20.5" cy="25.5" r="1.7"/></g></svg></span></div>
<div class="a cc tx" style="left:713px;top:716px;width:93px;height:52px;font-size:14px;color:#333">11-30</div>
<div class="a cc tx" style="left:808px;top:716px;width:131px;height:52px;font-size:14px;color:#333">百家乐</div>
<div class="a cc tx" style="left:941px;top:716px;width:81px;height:52px;font-size:14px;color:#333">AS1</div>
<div class="a cc tx" style="left:1024px;top:716px;width:149px;height:52px;font-size:14px;color:#333"><span><span style="color:#1f6bff">闲</span>(6) <span style="color:#f00">庄</span>(7)</span></div>
<div class="a cc tx" style="left:1175px;top:716px;width:108px;height:52px;font-size:14px;color:#1f6bff">30.00</div>
<div class="a cc tx" style="left:1285px;top:716px;width:131px;height:52px;font-size:14px;color:#333">30.00</div>
<div class="a cc tx" style="left:1418px;top:716px;width:107px;height:52px;font-size:14px;color:#333">28.50</div>
<div class="a cc tx" style="left:1527px;top:716px;width:377px;height:52px;font-size:14px;color:#333">540.95/569.45</div>
<div class="a cc tx" style="left:16px;top:770px;width:264px;height:52px;font-size:14px;color:#333">2026-01-06 05:59:37</div>
<div class="a cc tx" style="left:282px;top:770px;width:198px;height:52px;font-size:14px;color:#333">523101952588</div>
<div class="a cc tx" style="left:482px;top:770px;width:229px;height:52px;font-size:14px;color:#333"><span style="vertical-align:middle">674841232</span><span style="display:inline-block;width:36px;height:36px;margin-left:3px;border:1px solid #ebebeb;border-radius:4px;background:#f8f8f8;position:relative;vertical-align:middle"><svg style="position:absolute;left:-1px;top:-1px" width="36" height="36" viewBox="0 0 36 36"><path d="M17 29.5 H6.5 V6.5 H22.5 L29.5 12 V17" fill="none" stroke="#cfcfcf" stroke-width="1.1"/><path d="M22.5 6.5 V12 H29.5" fill="none" stroke="#cfcfcf" stroke-width="1.1"/><path d="M10 13.5 L12 15 V13.8 H23 V21.3 H12 V20 L10 21.5 Z" fill="#c4c4c4"/><circle cx="24" cy="23.5" r="7.2" fill="#f8f8f8" stroke="#d0d0d0" stroke-width="1"/><g fill="#c6c6c6"><circle cx="21" cy="20.8" r="1.7"/><circle cx="25.5" cy="19.8" r="1.7"/><circle cx="28" cy="24" r="1.7"/><circle cx="24.5" cy="27.5" r="1.7"/><circle cx="20.5" cy="25.5" r="1.7"/></g></svg></span></div>
<div class="a cc tx" style="left:713px;top:770px;width:93px;height:52px;font-size:14px;color:#333">11-29</div>
<div class="a cc tx" style="left:808px;top:770px;width:131px;height:52px;font-size:14px;color:#333">百家乐</div>
<div class="a cc tx" style="left:941px;top:770px;width:81px;height:52px;font-size:14px;color:#333">AS1</div>
<div class="a cc tx" style="left:1024px;top:770px;width:149px;height:52px;font-size:14px;color:#333"><span><span style="color:#1f6bff">闲</span>(6) <span style="color:#f00">庄</span>(7)</span></div>
<div class="a cc tx" style="left:1175px;top:770px;width:108px;height:52px;font-size:14px;color:#1f6bff">30.00</div>
<div class="a cc tx" style="left:1285px;top:770px;width:131px;height:52px;font-size:14px;color:#333">30.00</div>
<div class="a cc tx" style="left:1418px;top:770px;width:107px;height:52px;font-size:14px;color:#333">28.50</div>
<div class="a cc tx" style="left:1527px;top:770px;width:377px;height:52px;font-size:14px;color:#333">512.45/540.95</div>
<div class="a" style="left:15px;top:822px;width:1890px;height:74px;background:#e6e6e6;border-radius:0 0 4px 4px;box-shadow:0 1px 1px rgba(0,0,0,0.08)"></div>
<div class="a cc tx" style="left:15px;top:822px;width:265px;height:36px;background:#999;color:#fff;font-size:14px;">小计</div>
<div class="a cc tx" style="left:282px;top:822px;width:198px;height:36px;background:#999;color:#fff;font-size:14px;">7</div>
<div class="a cc tx" style="left:482px;top:822px;width:229px;height:36px;background:#999;color:#fff;font-size:14px;"></div>
<div class="a cc tx" style="left:713px;top:822px;width:93px;height:36px;background:#999;color:#fff;font-size:14px;"></div>
<div class="a cc tx" style="left:808px;top:822px;width:131px;height:36px;background:#999;color:#fff;font-size:14px;"></div>
<div class="a cc tx" style="left:941px;top:822px;width:81px;height:36px;background:#999;color:#fff;font-size:14px;"></div>
<div class="a cc tx" style="left:1024px;top:822px;width:149px;height:36px;background:#999;color:#fff;font-size:14px;"></div>
<div class="a cc tx" style="left:1175px;top:822px;width:108px;height:36px;background:#999;color:#fff;font-size:14px;">290.00</div>
<div class="a cc tx" style="left:1285px;top:822px;width:131px;height:36px;background:#999;color:#fff;font-size:14px;">290.00</div>
<div class="a cc tx" style="left:1418px;top:822px;width:107px;height:36px;background:#999;color:#fff;font-size:14px;">122.00</div>
<div class="a cc tx" style="left:1527px;top:822px;width:378px;height:36px;background:#999;color:#fff;font-size:14px;"></div>
<div class="a cc tx" style="left:15px;top:860px;width:265px;height:36px;background:#999;color:#fff;font-size:14px;border-radius:0 0 0 4px;">总计</div>
<div class="a cc tx" style="left:282px;top:860px;width:198px;height:36px;background:#999;color:#fff;font-size:14px;">7</div>
<div class="a cc tx" style="left:482px;top:860px;width:229px;height:36px;background:#999;color:#fff;font-size:14px;"></div>
<div class="a cc tx" style="left:713px;top:860px;width:93px;height:36px;background:#999;color:#fff;font-size:14px;"></div>
<div class="a cc tx" style="left:808px;top:860px;width:131px;height:36px;background:#999;color:#fff;font-size:14px;"></div>
<div class="a cc tx" style="left:941px;top:860px;width:81px;height:36px;background:#999;color:#fff;font-size:14px;"></div>
<div class="a cc tx" style="left:1024px;top:860px;width:149px;height:36px;background:#999;color:#fff;font-size:14px;"></div>
<div class="a cc tx" style="left:1175px;top:860px;width:108px;height:36px;background:#999;color:#fff;font-size:14px;">290.00</div>
<div class="a cc tx" style="left:1285px;top:860px;width:131px;height:36px;background:#999;color:#fff;font-size:14px;">290.00</div>
<div class="a cc tx" style="left:1418px;top:860px;width:107px;height:36px;background:#999;color:#fff;font-size:14px;">122.00</div>
<div class="a cc tx" style="left:1527px;top:860px;width:378px;height:36px;background:#999;color:#fff;font-size:14px;border-radius:0 0 4px 0;"></div>
</body></html>
